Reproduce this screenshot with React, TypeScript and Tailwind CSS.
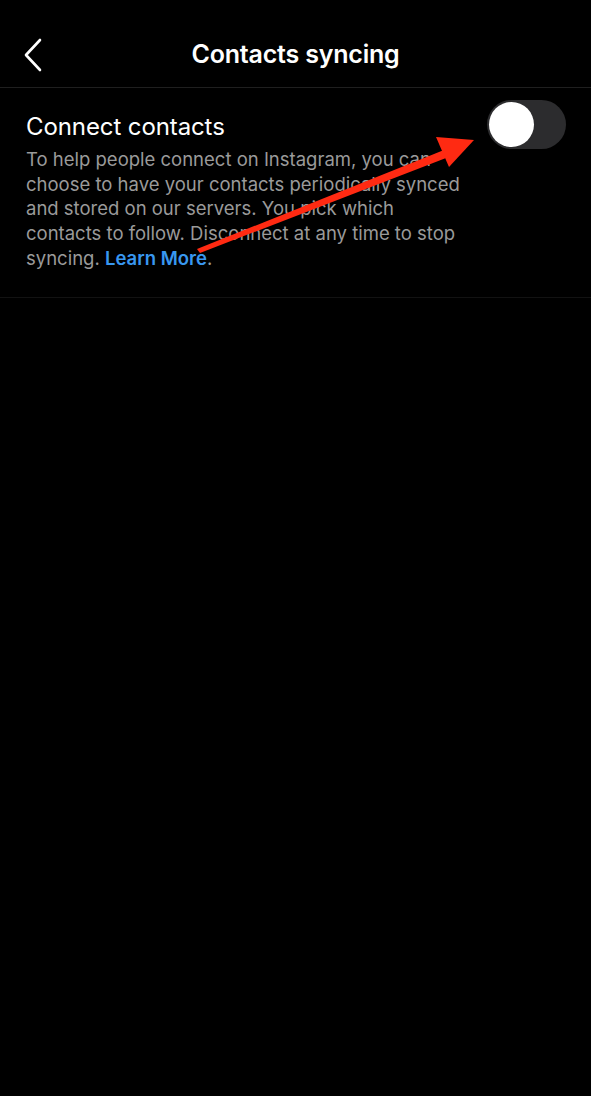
import React from 'react';

const Toggle: React.FC<{ on?: boolean }> = ({ on = false }) => (
  <div className="w-[79px] h-[49px] rounded-full bg-[#2c2c2e] p-[2px] flex items-center shrink-0">
    <div className={`w-[45px] h-[45px] rounded-full bg-white ${on ? 'ml-auto' : ''}`} />
  </div>
);

export default function App() {
  return (
    <div
      className="relative w-[591px] h-[1096px] bg-black text-white overflow-hidden"
      style={{ fontFamily: 'Inter, "Noto Sans", sans-serif' }}
    >
      {/* Header */}
      <div className="relative h-[88px] flex items-center justify-center border-b border-[#1f1f1f]">
        <button className="absolute left-[18px] top-[32px] p-1">
          <svg width="22" height="38" viewBox="0 0 22 38" fill="none">
            <path d="M18 4 L4 19 L18 34" stroke="white" strokeWidth="2.6" strokeLinecap="round" strokeLinejoin="round" />
          </svg>
        </button>
        <h1 className="text-[25px] font-semibold tracking-[-0.2px] mt-[22px]">Contacts syncing</h1>
      </div>

      {/* Connect contacts row */}
      <div className="flex items-start justify-between pl-[26px] pr-[25px] pt-[12px] pb-[26px] border-b border-[#121212]">
        <div className="w-[445px] pt-[12px]">
          <div className="text-[24px] leading-[30px] tracking-[-0.1px]">Connect contacts</div>
          <p className="text-[18.5px] leading-[24.7px] text-[#9a9a9a] mt-[5px]">
            To help people connect on Instagram, you can choose to have your contacts periodically synced and stored on our servers. You pick which contacts to follow. Disconnect at any time to stop syncing.{' '}
            <span className="text-[#3897f0] font-semibold">Learn More</span>.
          </p>
        </div>
        <Toggle />
      </div>

      {/* Red annotation arrow */}
      <svg className="absolute left-0 top-0 pointer-events-none" width="591" height="300" viewBox="0 0 591 300">
        <polygon points="197,249 444,150 446,158 200,253" fill="#ff2a12" />
        <polygon points="474,140 436,137 449,167" fill="#ff2a12" />
      </svg>
    </div>
  );
}
